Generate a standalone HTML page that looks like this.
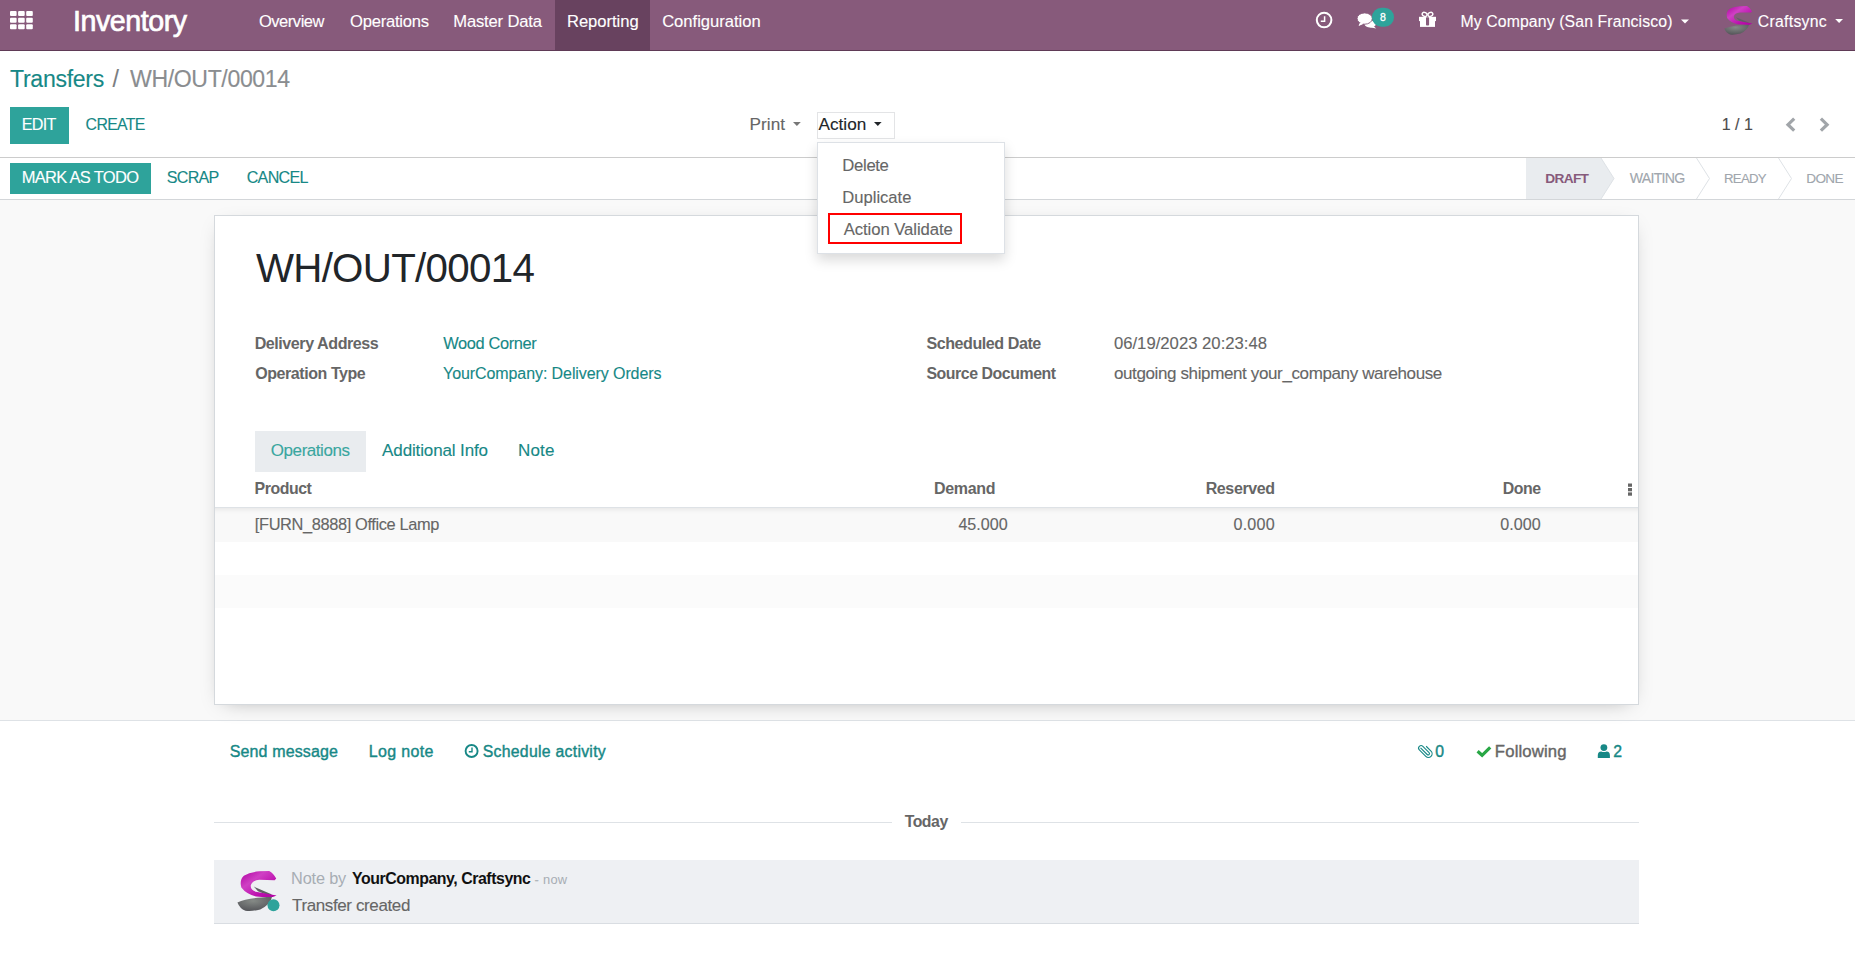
<!DOCTYPE html>
<html><head><meta charset="utf-8"><title>Inventory</title>
<style>
html,body{margin:0;padding:0;width:1855px;height:958px;overflow:hidden;background:#fff;font-family:"Liberation Sans",sans-serif;}
.a{position:absolute;}
.t{position:absolute;white-space:pre;line-height:1;}
svg{position:absolute;left:0;top:0;overflow:visible;}
</style></head><body>
<!-- form background -->
<div class="a" style="left:0;top:200px;width:1855px;height:520px;background:#f9f9f9"></div>
<!-- chatter border -->
<div class="a" style="left:0;top:720px;width:1855px;height:1px;background:#dee2e6"></div>
<!-- navbar -->
<div class="a" style="left:0;top:0;width:1855px;height:50px;background:#875A7B"></div>
<div class="a" style="left:0;top:50px;width:1855px;height:1px;background:#5f3a56"></div>
<div class="a" style="left:555px;top:0;width:95px;height:50px;background:#68425f"></div>
<!-- control panel border -->
<div class="a" style="left:0;top:157px;width:1855px;height:1px;background:#cccccc"></div>
<!-- statusbar bottom border -->
<div class="a" style="left:0;top:199px;width:1855px;height:1px;background:#d3d6d9"></div>
<!-- buttons -->
<div class="a" style="left:10px;top:107px;width:59px;height:37px;background:#2ea39b"></div>
<div class="a" style="left:10px;top:163px;width:141px;height:31px;background:#2ea39b"></div>
<!-- action box -->
<div class="a" style="left:817px;top:112px;width:76px;height:25px;border:1px solid #e3e4e6"></div>
<!-- sheet -->
<div class="a" style="left:214px;top:215px;width:1423px;height:488px;background:#fff;border:1px solid #d5d9dd;box-shadow:0 5px 20px -10px rgba(0,0,0,0.35)"></div>
<!-- tab active -->
<div class="a" style="left:255px;top:431px;width:111px;height:41px;background:#e9ecef"></div>
<!-- table -->
<div class="a" style="left:215px;top:507px;width:1423px;height:1px;background:#dee2e6"></div>
<div class="a" style="left:215px;top:508px;width:1423px;height:34px;background:#f9f9f9;box-shadow:inset 0 6px 6px -6px rgba(0,0,0,0.12)"></div>
<div class="a" style="left:215px;top:575px;width:1423px;height:33px;background:#fbfbfb"></div>
<!-- today lines -->
<div class="a" style="left:214px;top:822px;width:678px;height:1px;background:#dee2e6"></div>
<div class="a" style="left:961px;top:822px;width:678px;height:1px;background:#dee2e6"></div>
<!-- message -->
<div class="a" style="left:214px;top:860px;width:1425px;height:63px;background:#eef0f3;border-bottom:1px solid #d9dde2"></div>
<svg width="1855" height="958" viewBox="0 0 1855 958">
<defs>
 <linearGradient id="mg" x1="0" y1="0" x2="1" y2="1">
  <stop offset="0" stop-color="#b000a0"/><stop offset="0.35" stop-color="#cf40c4"/><stop offset="0.7" stop-color="#bc10ae"/><stop offset="1" stop-color="#b000a2"/>
 </linearGradient>
 <radialGradient id="gg" cx="0.45" cy="0.3" r="0.7">
  <stop offset="0" stop-color="#858a86"/><stop offset="1" stop-color="#55565a"/>
 </radialGradient>
 <g id="logo">
  <path fill="url(#gg)" d="M4.3,25.6 Q10,23 21.3,22 L29.1,21.3 Q28,27 20.6,30.5 Q14,32.2 10,31.4 Q6,30 4.3,25.6 Z"/>
  <path fill="#5f6063" d="M16,14.2 L28.6,19.6 L28.4,21.4 L19,17.5 Z"/>
  <path fill="url(#mg)" d="M8.9,6.4 Q13,3.9 20,3.3 L27,3 Q30,4.5 32,8.5 L30.9,9.6 L19.9,9.4 Q14.5,9.8 13.8,13.5 Q13.6,17 18.5,18.1 L32.3,20.6 L29.5,21.7 Q22,21.8 17.7,21.3 Q10.6,19.6 7.1,14.9 Q5.6,9.5 8.9,6.4 Z"/>
 </g>
</defs>
<!-- apps grid -->
<g fill="#fff">
 <rect x="10" y="11" width="6.6" height="5" rx="1"/><rect x="18.1" y="11" width="6.6" height="5" rx="1"/><rect x="26.2" y="11" width="6.6" height="5" rx="1"/>
 <rect x="10" y="17.7" width="6.6" height="5" rx="1"/><rect x="18.1" y="17.7" width="6.6" height="5" rx="1"/><rect x="26.2" y="17.7" width="6.6" height="5" rx="1"/>
 <rect x="10" y="24.2" width="6.6" height="5" rx="1"/><rect x="18.1" y="24.2" width="6.6" height="5" rx="1"/><rect x="26.2" y="24.2" width="6.6" height="5" rx="1"/>
</g>
<!-- clock -->
<circle cx="1324.1" cy="20.05" r="7.3" fill="none" stroke="#fff" stroke-width="2"/>
<path d="M1324.6,16.3 V21.2 H1320.8" fill="none" stroke="#fff" stroke-width="1.5"/>
<!-- chat -->
<g fill="#fff">
 <ellipse cx="1370.2" cy="24" rx="5.6" ry="3.6"/>
 <path d="M1373,25.5 L1376.2,28.6 L1369.5,27.2 Z"/>
 <path d="M1360.2,22.5 L1358.6,26 L1364.5,23.6 Z"/>
</g>
<ellipse cx="1364.7" cy="18.55" rx="7.6" ry="5.65" fill="#fff" stroke="#875A7B" stroke-width="0.9"/>
<path d="M1360.2,22.6 L1358.9,25.6 L1364,23.4 Z" fill="#fff"/>
<rect x="1372" y="7.8" width="22" height="19" rx="9.5" fill="#2ea39b"/>
<!-- gift -->
<g fill="#fff">
 <rect x="1419" y="16.8" width="17" height="4.3"/>
 <rect x="1420" y="21" width="15" height="5.9"/>
</g>
<rect x="1426" y="17.2" width="3.1" height="8.3" rx="0.8" fill="#875A7B"/>
<ellipse cx="1424.6" cy="14.4" rx="2.5" ry="1.9" fill="none" stroke="#fff" stroke-width="1.4" transform="rotate(25 1424.6 14.4)"/>
<ellipse cx="1430.4" cy="14.4" rx="2.5" ry="1.9" fill="none" stroke="#fff" stroke-width="1.4" transform="rotate(-25 1430.4 14.4)"/>
<!-- carets -->
<path d="M1681,19.6 H1689 L1685,23.6 Z" fill="#fff"/>
<path d="M1835.2,18.9 H1843 L1839.1,22.9 Z" fill="#fff"/>
<path d="M793,121.9 H800.8 L796.9,125.9 Z" fill="#777"/>
<path d="M874,121.9 H881.6 L877.8,125.9 Z" fill="#212529"/>
<!-- navbar logo -->
<use href="#logo" transform="translate(1720,3)"/>
<!-- pager chevrons -->
<path d="M1794.2,118.6 L1788,124.65 L1794.2,130.7" fill="none" stroke="#a1a5a9" stroke-width="3.2"/>
<path d="M1820.9,118.6 L1827.1,124.65 L1820.9,130.7" fill="none" stroke="#a1a5a9" stroke-width="3.2"/>
<!-- statusbar arrows -->
<path d="M1526,158 H1601 L1614,178.5 L1601,199 H1526 Z" fill="#e9ecef"/>
<path d="M1601,158 L1614,178.5 L1601,199" fill="none" stroke="#dee2e6" stroke-width="1"/>
<path d="M1696.5,158 L1709.5,178.5 L1696.5,199" fill="none" stroke="#dee2e6" stroke-width="1"/>
<path d="M1778.5,158 L1791.5,178.5 L1778.5,199" fill="none" stroke="#dee2e6" stroke-width="1"/>
<!-- kebab -->
<g fill="#666"><rect x="1628" y="483.5" width="4" height="3.3"/><rect x="1628" y="488" width="4" height="3.3"/><rect x="1628" y="492.4" width="4" height="3.3"/></g>
<!-- chatter clock -->
<circle cx="471.6" cy="751" r="6" fill="none" stroke="#178886" stroke-width="1.9"/>
<path d="M472,747.6 V751.8 H468.8" fill="none" stroke="#178886" stroke-width="1.4"/>
<!-- paperclip -->
<g transform="translate(1424.9,750.9) rotate(-45) scale(0.8)">
 <path d="M-1.2,-6.5 V5.2 A1.7,1.7 0 0 0 2.2,5.2 V-5.8 A3.1,3.1 0 0 0 -4,-5.8 V5.6 A4.6,4.6 0 0 0 5.2,5.6 V-3" fill="none" stroke="#178886" stroke-width="1.4"/>
</g>
<!-- check -->
<path d="M1477.6,751.3 L1482.1,755.3 L1490.2,747.4" fill="none" stroke="#28a745" stroke-width="3.2"/>
<!-- person -->
<g fill="#178886"><circle cx="1603.9" cy="747.6" r="3.4"/><path d="M1597.8,757.9 V755.3 Q1597.8,751.6 1601.2,751.4 Q1603.9,752.6 1606.6,751.4 Q1609.9,751.6 1609.9,755.3 V757.9 Z"/></g>
<!-- avatar -->
<use href="#logo" transform="translate(231.4,866.7) scale(1.4)"/>
<circle cx="273.5" cy="905.2" r="6" fill="#2ea39b"/>
</svg>
<!-- dropdown -->
<div class="a" style="left:817px;top:142px;width:186px;height:110px;background:#fff;border:1px solid #dde1e6;box-shadow:0 6px 12px rgba(0,0,0,0.15)"></div>
<div class="a" style="left:828px;top:213px;width:130px;height:27px;border:2px solid #f00"></div>
<span class="t" style="left:73.03px;top:7.00px;font-size:28.60px;color:#ffffff;letter-spacing:-0.450px;-webkit-text-stroke:0.7px #ffffff">Inventory</span>
<span class="t" style="left:258.88px;top:13.00px;font-size:16.50px;color:#ffffff;letter-spacing:-0.450px;-webkit-text-stroke:0.12px #ffffff">Overview</span>
<span class="t" style="left:349.97px;top:14.00px;font-size:16.60px;color:#ffffff;letter-spacing:-0.233px;-webkit-text-stroke:0.12px #ffffff">Operations</span>
<span class="t" style="left:453.27px;top:14.00px;font-size:16.60px;color:#ffffff;letter-spacing:-0.168px;-webkit-text-stroke:0.12px #ffffff">Master Data</span>
<span class="t" style="left:566.97px;top:14.00px;font-size:16.60px;color:#ffffff;letter-spacing:-0.028px;-webkit-text-stroke:0.12px #ffffff">Reporting</span>
<span class="t" style="left:662.17px;top:14.00px;font-size:16.60px;color:#ffffff;letter-spacing:-0.017px;-webkit-text-stroke:0.12px #ffffff">Configuration</span>
<span class="t" style="left:1460.43px;top:14.00px;font-size:15.80px;color:#ffffff;letter-spacing:0.123px;-webkit-text-stroke:0.12px #ffffff">My Company (San Francisco)</span>
<span class="t" style="left:1757.71px;top:14.00px;font-size:15.80px;color:#ffffff;letter-spacing:0.294px;-webkit-text-stroke:0.12px #ffffff">Craftsync</span>
<span class="t" style="left:10.04px;top:68.00px;font-size:23.10px;color:#178886;letter-spacing:-0.306px;-webkit-text-stroke:0.12px #178886">Transfers</span>
<span class="t" style="left:112.40px;top:68.00px;font-size:23.10px;color:#7a7d80;-webkit-text-stroke:0.12px #7a7d80">/</span>
<span class="t" style="left:129.97px;top:68.00px;font-size:23.10px;color:#8a8d90;letter-spacing:-0.372px;-webkit-text-stroke:0.12px #8a8d90">WH/OUT/00014</span>
<span class="t" style="left:21.71px;top:116.00px;font-size:16.10px;color:#ffffff;letter-spacing:-0.700px;-webkit-text-stroke:0.12px #ffffff">EDIT</span>
<span class="t" style="left:85.61px;top:117.00px;font-size:15.90px;color:#178886;letter-spacing:-0.700px;-webkit-text-stroke:0.12px #178886">CREATE</span>
<span class="t" style="left:749.43px;top:116.00px;font-size:17.20px;color:#666666;letter-spacing:0.078px;-webkit-text-stroke:0.12px #666666">Print</span>
<span class="t" style="left:818.50px;top:116.00px;font-size:17.20px;color:#212529;-webkit-text-stroke:0.12px #212529">Action</span>
<span class="t" style="left:1721.72px;top:117.00px;font-size:16.00px;color:#4c4c4c;-webkit-text-stroke:0.15px #4c4c4c">1 / 1</span>
<span class="t" style="left:842.36px;top:158.00px;font-size:16.70px;color:#666666;letter-spacing:-0.340px;-webkit-text-stroke:0.12px #666666">Delete</span>
<span class="t" style="left:842.37px;top:190.00px;font-size:16.60px;color:#666666;letter-spacing:-0.018px;-webkit-text-stroke:0.12px #666666">Duplicate</span>
<span class="t" style="left:843.70px;top:222.00px;font-size:16.70px;color:#666666;letter-spacing:-0.070px;-webkit-text-stroke:0.12px #666666">Action Validate</span>
<span class="t" style="left:21.68px;top:169.00px;font-size:16.50px;color:#ffffff;letter-spacing:-0.700px;-webkit-text-stroke:0.12px #ffffff">MARK AS TODO</span>
<span class="t" style="left:166.70px;top:169.00px;font-size:16.10px;color:#178886;letter-spacing:-0.700px;-webkit-text-stroke:0.12px #178886">SCRAP</span>
<span class="t" style="left:246.69px;top:169.00px;font-size:16.10px;color:#178886;letter-spacing:-0.700px;-webkit-text-stroke:0.12px #178886">CANCEL</span>
<span class="t" style="left:1545.34px;top:172.00px;font-size:13.70px;color:#875A7B;letter-spacing:-0.700px;font-weight:700">DRAFT</span>
<span class="t" style="left:1629.66px;top:171.00px;font-size:14.10px;color:#a0a6ad;letter-spacing:-0.700px;-webkit-text-stroke:0.12px #a0a6ad">WAITING</span>
<span class="t" style="left:1724.04px;top:172.00px;font-size:13.20px;color:#a0a6ad;letter-spacing:-0.700px;-webkit-text-stroke:0.12px #a0a6ad">READY</span>
<span class="t" style="left:1806.31px;top:172.00px;font-size:13.60px;color:#a0a6ad;letter-spacing:-0.700px;-webkit-text-stroke:0.12px #a0a6ad">DONE</span>
<span class="t" style="left:255.90px;top:249.00px;font-size:40.30px;color:#212529;letter-spacing:-0.700px">WH/OUT/00014</span>
<span class="t" style="left:254.67px;top:335.00px;font-size:16.10px;color:#666666;letter-spacing:-0.450px;font-weight:700">Delivery Address</span>
<span class="t" style="left:255.16px;top:366.00px;font-size:16.00px;color:#666666;letter-spacing:-0.427px;font-weight:700">Operation Type</span>
<span class="t" style="left:443.24px;top:335.00px;font-size:16.40px;color:#178886;letter-spacing:-0.370px;-webkit-text-stroke:0.12px #178886">Wood Corner</span>
<span class="t" style="left:443.08px;top:366.00px;font-size:16.00px;color:#178886;letter-spacing:-0.090px;-webkit-text-stroke:0.12px #178886">YourCompany: Delivery Orders</span>
<span class="t" style="left:926.42px;top:335.00px;font-size:16.10px;color:#666666;letter-spacing:-0.450px;font-weight:700">Scheduled Date</span>
<span class="t" style="left:926.42px;top:366.00px;font-size:15.90px;color:#666666;letter-spacing:-0.450px;font-weight:700">Source Document</span>
<span class="t" style="left:1113.93px;top:336.00px;font-size:16.70px;color:#666666;-webkit-text-stroke:0.12px #666666">06/19/2023 20:23:48</span>
<span class="t" style="left:1113.92px;top:365.00px;font-size:17.00px;color:#666666;letter-spacing:-0.375px;-webkit-text-stroke:0.12px #666666">outgoing shipment your_company warehouse</span>
<span class="t" style="left:270.85px;top:442.00px;font-size:17.00px;color:#3aa6a0;letter-spacing:-0.450px;-webkit-text-stroke:0.12px #3aa6a0">Operations</span>
<span class="t" style="left:382.10px;top:442.00px;font-size:17.00px;color:#178886;letter-spacing:-0.131px;-webkit-text-stroke:0.12px #178886">Additional Info</span>
<span class="t" style="left:517.94px;top:442.00px;font-size:17.00px;color:#178886;letter-spacing:0.219px;-webkit-text-stroke:0.12px #178886">Note</span>
<span class="t" style="left:254.59px;top:481.00px;font-size:15.90px;color:#666666;letter-spacing:-0.450px;font-weight:700">Product</span>
<span class="t" style="left:933.88px;top:481.00px;font-size:16.00px;color:#666666;letter-spacing:-0.283px;font-weight:700">Demand</span>
<span class="t" style="left:1205.68px;top:481.00px;font-size:16.00px;color:#666666;letter-spacing:-0.381px;font-weight:700">Reserved</span>
<span class="t" style="left:1502.69px;top:481.00px;font-size:15.90px;color:#666666;letter-spacing:-0.450px;font-weight:700">Done</span>
<span class="t" style="left:254.85px;top:516.00px;font-size:16.40px;color:#666666;letter-spacing:-0.379px;-webkit-text-stroke:0.12px #666666">[FURN_8888] Office Lamp</span>
<span class="t" style="left:958.38px;top:516.00px;font-size:16.10px;color:#666666;letter-spacing:0.040px;-webkit-text-stroke:0.12px #666666">45.000</span>
<span class="t" style="left:1233.55px;top:516.00px;font-size:16.10px;color:#666666;letter-spacing:0.189px;-webkit-text-stroke:0.12px #666666">0.000</span>
<span class="t" style="left:1500.25px;top:516.00px;font-size:16.10px;color:#666666;letter-spacing:0.014px;-webkit-text-stroke:0.12px #666666">0.000</span>
<span class="t" style="left:229.80px;top:744.00px;font-size:16.00px;color:#178886;letter-spacing:0.118px;-webkit-text-stroke:0.4px #178886">Send message</span>
<span class="t" style="left:368.82px;top:744.00px;font-size:16.00px;color:#178886;letter-spacing:0.346px;-webkit-text-stroke:0.4px #178886">Log note</span>
<span class="t" style="left:482.71px;top:744.00px;font-size:15.80px;color:#178886;letter-spacing:0.279px;-webkit-text-stroke:0.4px #178886">Schedule activity</span>
<span class="t" style="left:1435.37px;top:744.00px;font-size:15.80px;color:#178886;-webkit-text-stroke:0.4px #178886">0</span>
<span class="t" style="left:1494.86px;top:744.00px;font-size:16.70px;color:#666666;letter-spacing:0.150px;-webkit-text-stroke:0.4px #666666">Following</span>
<span class="t" style="left:1613.21px;top:744.00px;font-size:15.80px;color:#178886;-webkit-text-stroke:0.4px #178886">2</span>
<span class="t" style="left:904.64px;top:814.00px;font-size:15.80px;color:#666666;letter-spacing:-0.450px;font-weight:700">Today</span>
<span class="t" style="left:291.10px;top:870.00px;font-size:16.30px;color:#a7adb3;letter-spacing:-0.166px">Note by</span>
<span class="t" style="left:351.98px;top:871.00px;font-size:15.90px;color:#111;letter-spacing:-0.450px;font-weight:700">YourCompany, Craftsync</span>
<span class="t" style="left:534.38px;top:874.00px;font-size:12.90px;color:#b0b5ba;-webkit-text-stroke:0.12px #b0b5ba">-</span>
<span class="t" style="left:543.00px;top:874.00px;font-size:12.90px;color:#a7adb3;letter-spacing:0.225px">now</span>
<span class="t" style="left:292.06px;top:897.00px;font-size:17.00px;color:#666666;letter-spacing:-0.387px;-webkit-text-stroke:0.12px #666666">Transfer created</span>
<span class="t" style="left:1380px;top:12px;font-size:10.5px;color:#fff;-webkit-text-stroke:0.3px #fff">8</span>
</body></html>
